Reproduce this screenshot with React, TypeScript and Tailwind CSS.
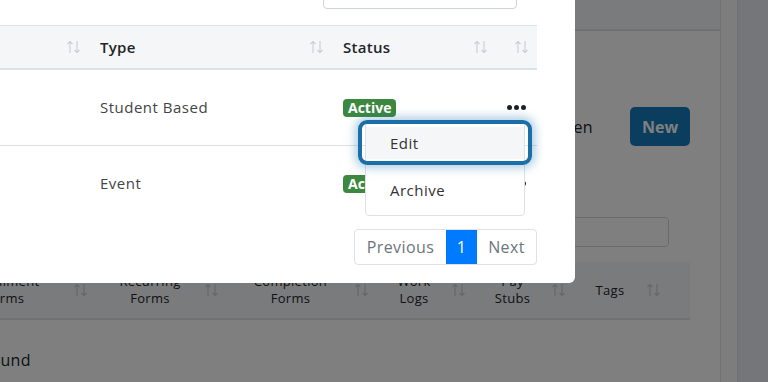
import React from "react";

const SortIcon = ({ className = "" }: { className?: string }) => (
  <svg width="13" height="14" viewBox="0 0 13 14" fill="none" className={className}>
    <path d="M3 13V1.5M0.5 4L3 1.5L5.5 4" stroke="currentColor" strokeWidth="1.1" />
    <path d="M10 1V12.5M7.5 10L10 12.5L12.5 10" stroke="currentColor" strokeWidth="1.1" />
  </svg>
);

const Badge = () => (
  <span className="inline-flex h-[18px] items-center rounded-[4px] bg-[#3b883e] px-[5px] text-[14px] font-bold leading-none text-white">
    Active
  </span>
);

const BgHeadCell = ({ w, lines }: { w: string; lines: string[] }) => (
  <div className={`${w} flex h-full shrink-0 items-center pr-[8px]`}>
    <div className="flex flex-1 flex-col items-center text-center text-[13px] font-medium leading-[17px] tracking-[0.3px] text-[#212529] whitespace-nowrap">
      {lines.map((l) => (
        <span key={l}>{l}</span>
      ))}
    </div>
    <SortIcon className="text-[#c9cdd2]" />
  </div>
);

const Dots = () => (
  <div className="flex gap-[2.5px] pl-[1px]">
    <span className="h-[4.5px] w-[4.5px] rounded-full bg-[#222]" />
    <span className="h-[4.5px] w-[4.5px] rounded-full bg-[#222]" />
    <span className="h-[4.5px] w-[4.5px] rounded-full bg-[#222]" />
  </div>
);

export default function App() {
  return (
    <div
      className="relative h-[382px] w-[768px] overflow-hidden bg-white"
      style={{ fontFamily: "'Open Sans', 'Noto Sans', sans-serif" }}
    >
      {/* Background page */}
      <div className="flex h-full w-full">
        <div className="flex w-[721px] shrink-0 flex-col">
          <div className="h-[30px] shrink-0 border-b border-r border-[#dee2e6] bg-[#f5f6f8]" />
          <div className="flex flex-1 flex-col border-r border-t border-[#dee2e6] bg-white pr-[30px]">
            <div className="mt-[76px] flex items-center justify-end">
              <span className="text-[16px] tracking-[0.4px] text-[#212529]">Show Hidden</span>
              <button className="ml-[37px] h-[39px] w-[60px] rounded-[5px] bg-[#177bbd] text-[16px] font-bold text-white">
                New
              </button>
            </div>
            <div className="mt-[71px] flex justify-end pr-[21px]">
              <div className="h-[30px] w-[260px] rounded-[4px] border border-[#ced4da] bg-white" />
            </div>
            <div className="mt-[15px] flex h-[58px] justify-end overflow-visible border-b-2 border-[#dee2e6] bg-[#f5f6f8]">
              <BgHeadCell w="w-[160px]" lines={["Enrollment", "Forms"]} />
              <BgHeadCell w="w-[131px]" lines={["Recurring", "Forms"]} />
              <BgHeadCell w="w-[150px]" lines={["Completion", "Forms"]} />
              <BgHeadCell w="w-[97px]" lines={["Work", "Logs"]} />
              <BgHeadCell w="w-[100px]" lines={["Pay", "Stubs"]} />
              <BgHeadCell w="w-[95px]" lines={["Tags"]} />
              <div className="w-[22px] shrink-0" />
            </div>
            <div className="mt-[28px] flex w-[31px] justify-end whitespace-nowrap text-[16px] tracking-[0.4px] text-[#212529]">
              No records found
            </div>
          </div>
        </div>
        <div className="w-[16px] shrink-0 bg-[#fafafa]" />
        <div className="flex-1 border-l border-[#e4e4e4] bg-[#eaecf4]" />
      </div>

      {/* Overlay */}
      <div className="absolute inset-0 bg-black/50" />

      {/* Modal */}
      <div className="absolute left-[-125px] top-[-40px] w-[700px] rounded-[6px] bg-white pb-[18px] pl-[16px] pr-[38px] pt-[13px]">
        <div className="flex items-center justify-end pr-[20px]">
          <span className="mr-[8px] text-[15px] text-[#212529]">Search:</span>
          <div className="h-[36px] w-[194px] rounded-[4px] border border-[#ced4da]" />
        </div>

        <div className="mt-[16px] grid grid-cols-[1fr_243px_164px_42px]">
          {/* header */}
          <div className="col-span-4 grid grid-cols-subgrid border-b-2 border-t border-[#dee2e6] bg-[#f5f6f8]">
            <div className="flex h-[42px] items-center justify-between pl-[12px] pr-[8px]">
              <span className="text-[15px] font-semibold tracking-[0.3px] text-[#212529]">Name</span>
              <SortIcon className="text-[#c9cdd2]" />
            </div>
            <div className="flex h-[42px] items-center justify-between pl-[12px] pr-[8px]">
              <span className="text-[15px] font-semibold tracking-[0.3px] text-[#212529]">Type</span>
              <SortIcon className="text-[#c9cdd2]" />
            </div>
            <div className="flex h-[42px] items-center justify-between pl-[12px] pr-[8px]">
              <span className="text-[15px] font-semibold tracking-[0.3px] text-[#212529]">Status</span>
              <SortIcon className="text-[#c9cdd2]" />
            </div>
            <div className="flex h-[42px] items-center justify-end pr-[9px]">
              <SortIcon className="text-[#c9cdd2]" />
            </div>
          </div>

          {/* row 1 */}
          <div className="col-span-4 grid grid-cols-subgrid border-b border-[#dee2e6]">
            <div className="flex h-[75px] items-center pl-[12px] text-[15px] tracking-[0.5px] text-[#444]">Orientation</div>
            <div className="flex h-[75px] items-center pl-[12px] text-[15px] tracking-[0.5px] text-[#444]">Student Based</div>
            <div className="flex h-[75px] items-center pl-[12px]">
              <Badge />
            </div>
            <div className="relative flex h-[75px] items-center justify-center">
              <Dots />
              {/* dropdown menu */}
              <div className="absolute left-[-130px] top-[51px] z-10 w-[160px] rounded-[4px] border border-[#dee2e6] bg-white pb-[9px] pt-[5px]">
                <div className="relative flex h-[32px] items-center bg-[#f5f6f8] pl-[24px] text-[15px] tracking-[0.5px] text-[#333]">
                  Edit
                  <div className="absolute -bottom-[6px] -left-[8px] -right-[8px] -top-[7px] rounded-[9px] border-[4px] border-[#1b6fa9] shadow-[0_0_10px_3px_rgba(27,111,169,0.35)]" />
                </div>
                <div className="mt-[15px] flex h-[32px] items-center pl-[24px] text-[15px] tracking-[0.5px] text-[#333]">
                  Archive
                </div>
              </div>
            </div>
          </div>

          {/* row 2 */}
          <div className="col-span-4 grid grid-cols-subgrid">
            <div className="flex h-[75px] items-center pl-[12px] text-[15px] tracking-[0.5px] text-[#444]">Field Trip</div>
            <div className="flex h-[75px] items-center pl-[12px] text-[15px] tracking-[0.5px] text-[#444]">Event</div>
            <div className="flex h-[75px] items-center pl-[12px]">
              <Badge />
            </div>
            <div className="flex h-[75px] items-center justify-center">
              <Dots />
            </div>
          </div>
        </div>

        {/* pagination */}
        <div className="mt-[8px] flex justify-end">
          <div className="flex h-[36px] overflow-hidden rounded-[4px] border border-[#dee2e6] text-[16px] tracking-[0.4px]">
            <div className="flex w-[91px] items-center justify-center text-[#6c757d]">Previous</div>
            <div className="flex w-[31px] items-center justify-center bg-[#007bff] text-white">1</div>
            <div className="flex w-[59px] items-center justify-center text-[#6c757d]">Next</div>
          </div>
        </div>
      </div>
    </div>
  );
}
